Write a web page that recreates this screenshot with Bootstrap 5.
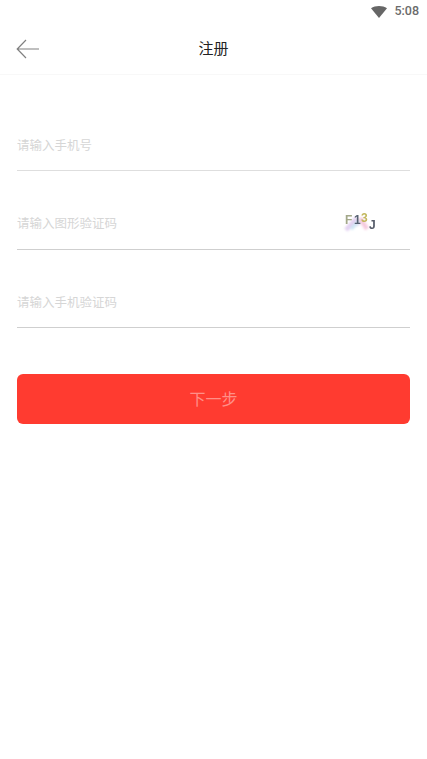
<!DOCTYPE html>
<html lang="zh">
<head>
<meta charset="utf-8">
<meta name="viewport" content="width=device-width, initial-scale=1">
<link href="https://cdn.jsdelivr.net/npm/bootstrap@5.3.0/dist/css/bootstrap.min.css" rel="stylesheet">
<style>
html,body{height:100%;background:#fff;font-family:"Roboto","Noto Sans CJK SC",sans-serif;}
.status-strip{height:23px;padding-right:8px;color:#6b6b6b;font-size:12.500px;font-weight:500;gap:7px;}
.top-head{height:52px;border-bottom:1px solid #f8f8f8;padding:0 16px;}
.back-slot{left:16px;top:50%;transform:translateY(-50%);line-height:0;}
.head-title{font-size:15px;color:#222;font-family:"Noto Sans CJK SC",sans-serif;margin-top:-1px;}
.reg-form{padding:0 17px;}
.field-row{height:78.500px;border-bottom:1px solid #cfcfcf;padding-bottom:16px;}
.field-row.first-row{height:96px;border-bottom-color:#dedede;padding-bottom:15px;}
.field-row.last-row{padding-bottom:15px;}
.field-input{border:0;outline:0;padding:0;background:transparent;font-size:12.500px;color:#333;font-family:"Noto Sans CJK SC",sans-serif;min-width:0;line-height:20px;}
.field-input::placeholder{color:#d6d6d6;opacity:1;}
.captcha-box{width:34px;height:22px;margin-right:32px;overflow:visible;}
.captcha-txt{font-family:"Liberation Sans",sans-serif;font-size:12px;font-weight:700;}
.next-btn{height:50px;margin-top:46px;padding-bottom:9px;background:#ff3b30;border:0;border-radius:6px;color:#ff8f88;font-size:16px;font-family:"Noto Sans CJK SC",sans-serif;}
.next-btn:disabled{background:#ff3b30;color:#ff8f88;opacity:1;}
</style>
</head>
<body>
<div class="status-strip d-flex justify-content-end align-items-center">
<svg width="16" height="12" viewBox="0 0 16 12"><path d="M0 2.200C2.200.8 5 0 8 0s5.800.8 8 2.200L8 12z" fill="#666"/></svg>
<span>5:08</span>
</div>
<header class="top-head position-relative d-flex justify-content-center align-items-center">
<span class="back-slot position-absolute">
<svg width="24" height="20" viewBox="0 0 24 20" fill="none" stroke="#808080" stroke-width="1.200"><path d="M23 10H1.500M10 1 1.200 10 10 19"/></svg>
</span>
<div class="head-title">注册</div>
</header>
<form class="reg-form">
<div class="field-row first-row d-flex align-items-end">
<input class="field-input flex-grow-1" type="tel" placeholder="请输入手机号">
</div>
<div class="field-row d-flex align-items-end">
<input class="field-input flex-grow-1" type="text" placeholder="请输入图形验证码">
<svg class="captcha-box flex-shrink-0" viewBox="0 0 34 22">
<defs><filter id="blurA" x="-30%" y="-30%" width="160%" height="160%"><feGaussianBlur stdDeviation="1.300"/></filter><filter id="blurB" x="-20%" y="-20%" width="140%" height="140%"><feGaussianBlur stdDeviation=".6"/></filter></defs>
<g filter="url(#blurA)" opacity=".8">
<path d="M2 19 11 9 15 14" stroke="#dcc6ee" stroke-width="4.500" fill="none"/>
<path d="M7 18 17 8" stroke="#c4e0f1" stroke-width="3.500" fill="none"/>
<path d="M16 7 23 18" stroke="#f3bdd5" stroke-width="4.500" fill="none"/>
</g>
<g filter="url(#blurB)" class="captcha-txt">
<text x="1" y="13" fill="#a3a88a">F</text>
<text x="10" y="13" fill="#566171">1</text>
<text x="17" y="11" fill="#c2b75c">3</text>
<text x="25" y="18" fill="#565c69">J</text>
</g>
</svg>
</div>
<div class="field-row last-row d-flex align-items-end">
<input class="field-input flex-grow-1" type="text" placeholder="请输入手机验证码">
</div>
<button class="next-btn btn w-100 d-block" type="button" disabled>下一步</button>
</form>
<script src="https://cdn.jsdelivr.net/npm/bootstrap@5.3.0/dist/js/bootstrap.bundle.min.js"></script>
</body>
</html>
